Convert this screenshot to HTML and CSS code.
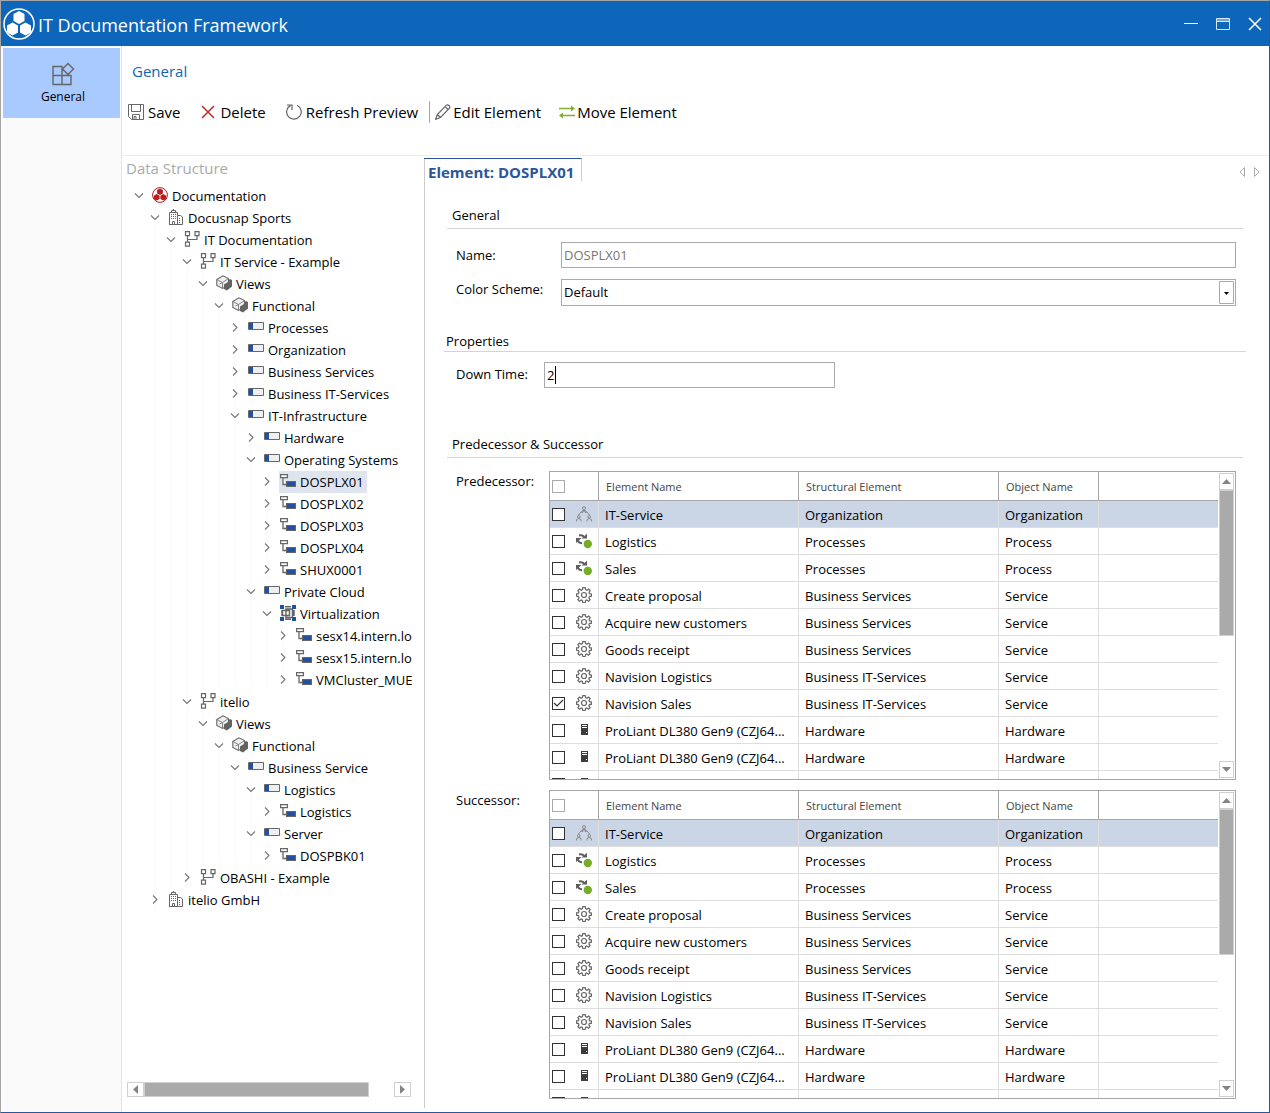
FILE: index.html
```html
<!DOCTYPE html>
<html lang="en">
<head>
<meta charset="utf-8">
<title>IT Documentation Framework</title>
<link rel="stylesheet" href="styles.css">
</head>
<body>
<svg class="defs" aria-hidden="true">
  <symbol id="open" viewBox="0 0 16 16"><path d="M4 5.500l4 4 4-4" fill="none" stroke="#777" stroke-width="1.100"/></symbol>
  <symbol id="shut" viewBox="0 0 16 16"><path d="M6 3.500l4 4-4 4" fill="none" stroke="#777" stroke-width="1.100"/></symbol>
  <symbol id="doc" viewBox="0 0 16 16"><circle cx="8" cy="8" r="7.400" fill="#fff" stroke="#b81c1c"/><g fill="#b81c1c"><path d="M8 1.500l2.900 1.600v3.300L8 8 5.100 6.400V3.100zM4.700 7.100l2.900 1.600V12l-2.900 1.500L1.800 12V8.700zM11.300 7.100l2.900 1.600V12l-2.900 1.500L8.400 12V8.700z"/></g></symbol>
  <symbol id="bldg" viewBox="0 0 16 16"><g fill="none" stroke="#666"><path d="M1.500 15.500v-12h8v12M3.500 3.500v-2h4v2M5.500 1.500V0M9.500 6.500h3l2 1.500v7.500H1M4.500 15.500v-3h2v3"/><path d="M3 5.500h5M3 7.500h5M3 9.500h5M11 9.500h2M11 11.500h2M11 13.500h2" stroke-dasharray="1 1"/></g></symbol>
  <symbol id="net" viewBox="0 0 16 16"><g fill="none" stroke="#666" stroke-width="1.200"><path d="M1.500.6h4v4h-4zM11 .6h4v4h-4zM1.500 11.200h4v4h-4zM3.500 4.600v6.600M3.500 8.500h9.500V4.600"/></g></symbol>
  <symbol id="cube" viewBox="0 0 16 16"><path d="M.8 4.500L7 .8l5.500 2.700v7L6.500 13.500l-5.700-3z" fill="#f0f0f0" stroke="#666" stroke-width="1.100"/><path d="M.8 4.500l5.700 3 6-4M6.500 7.500v6M3.500 9l3-1.500" fill="none" stroke="#777" stroke-width=".9"/><path d="M8 9.500l4-2.500V5.500L14 4l2 1v6.500L11 15.500 8 14z" fill="#636363"/></symbol>
  <symbol id="bar" viewBox="0 0 16 16"><path d="M.5 3.500h15v7H.5z" fill="#efeff1" stroke="#666"/><path d="M1 4h4v6H1z" fill="#2350a0"/></symbol>
  <symbol id="node" viewBox="0 0 16 16"><path d="M.6 1.600h6.800v3H.6zM3 5v6.500h4" fill="#fff" stroke="#666" stroke-width="1.300"/><path d="M6.500 8.500h9v5h-9z" fill="#2350a0" stroke="#666" stroke-width="1.200"/></symbol>
  <symbol id="virt" viewBox="0 0 16 16"><g fill="none" stroke="#666" stroke-width="1.500"><path d="M2.500 5.500h7v5h-7zM6 4h6.500v8.500H6zM5 1.700h6M5 14.300h6M14 5v6M2 5v6"/></g><path d="M0 0h4v4H0zM12 0h4v4h-4zM0 12h4v4H0zM12 12h4v4h-4z" fill="#2350a0"/></symbol>
  <symbol id="org" viewBox="0 0 16 16"><g fill="none" stroke="#888"><circle cx="8" cy="2.200" r="1.500"/><path d="M5.800 7V5.200L8 4l2.200 1.200V7M6.500 7l.5-2h2l.5 2M5 6L2.500 9M11 6l2.500 3"/><circle cx="2.800" cy="10.800" r="1.300"/><circle cx="13.200" cy="10.800" r="1.300"/><path d="M.6 15.500v-2l2.200-1 2.200 1v2M11 15.500v-2l2.200-1 2.200 1v2"/></g></symbol>
  <symbol id="proc" viewBox="0 0 16 16"><path d="M3 2.500c2.500-.8 4.500 0 5.500 2M2 7c0 2 1 3 4 3.200" fill="none" stroke="#5e5e5e" stroke-width="2"/><path d="M5.500 5.500h5.500V.8zM0 5h5.500L0 10z" fill="#5e5e5e"/><circle cx="11.800" cy="11" r="4.200" fill="#76ac28"/></symbol>
  <symbol id="gear" viewBox="0 0 16 16"><g fill="none" stroke="#666" stroke-width="1.200"><path d="M6.800.6h2.400l.4 2 1.300.6 1.700-1.200 1.600 1.600L13 5.300l.5 1.300 1.900.3v2.300l-2 .4-.5 1.300 1.200 1.700-1.600 1.600-1.700-1.200-1.200.5-.4 2H6.800l-.4-2-1.200-.5-1.700 1.200-1.600-1.600L3 10.900l-.5-1.300-2-.4V6.900l2-.3L3 5.300 1.900 3.600 3.500 2l1.700 1.200 1.200-.6z"/><circle cx="8" cy="8" r="2.500"/></g></symbol>
  <symbol id="srv" viewBox="0 0 16 16"><path d="M5 2h7v11H5z" fill="#3c3c3c"/><path d="M6 3.500h5M6 5.500h5" stroke="#fff"/><path d="M10 10h1v1h-1z" fill="#fff"/></symbol>
  <symbol id="up" viewBox="0 0 9 9"><path d="M0 7l4.500-5L9 7z" fill="#848484"/></symbol>
  <symbol id="down" viewBox="0 0 9 9"><path d="M0 2l4.500 5L9 2z" fill="#848484"/></symbol>
</svg>
<div class="window">
  <header class="titlebar">
    <svg class="logo" viewBox="0 0 32 32"><circle cx="16" cy="16" r="15" fill="none" stroke="#fff" stroke-width="1.500"/><path d="M16 3l5.500 3v7L16 16l-5.500-3V6zM9.500 14.500l5.500 3v7l-5.500 3-5.500-3v-7zM22.500 14.500l5.500 3v7l-5.500 3-5.500-3v-7z" fill="#fff"/></svg>
    <h1>IT Documentation Framework</h1>
    <div class="controls">
      <button aria-label="Minimize"><svg viewBox="0 0 16 16"><path d="M1 5.500h14" stroke="#fff"/></svg></button>
      <button aria-label="Maximize"><svg viewBox="0 0 16 16"><path d="M1 1h14v3H1z" fill="#6ea3d6"/><path d="M1.500.5h13v11h-13zM1.500 3.500h13" fill="none" stroke="#d8e6f5"/></svg></button>
      <button aria-label="Close"><svg viewBox="0 0 16 16"><path d="M2 0l12 12M14 0L2 12" stroke="#fff" stroke-width="1.500"/></svg></button>
    </div>
  </header>
  <div class="body">
    <nav class="side">
      <button class="tile"><svg viewBox="0 0 24 24"><path d="M2 4.500h9v9H2zM2 13.500h9v9H2zM11 13.500h9v9h-9zM17 1.500l5.500 5.500-5.500 5.500L11.500 7z" fill="none" stroke="#666" stroke-width="1.400"/></svg><span>General</span></button>
    </nav>
    <main class="main">
      <section class="ribbon">
        <h2>General</h2>
        <div class="tools">
          <button><svg viewBox="0 0 16 16"><path d="M.5.5h15v15H3.500l-3-3zM3.500.5v7h9v-7M4.500 15.500v-5h7v5M6 12.500h2v3H6z" fill="none" stroke="#666"/></svg>Save</button>
          <button class="delete"><svg viewBox="0 0 16 16"><path d="M2 2l12 12M14 2L2 14" stroke="#c02a2a" stroke-width="1.500"/></svg>Delete</button>
          <button class="refresh"><svg viewBox="0 0 16 16"><path d="M11 1.200a7.300 7.300 0 1 1-6.500.2M1 1h5v5" fill="none" stroke="#666" stroke-width="1.200"/></svg>Refresh Preview</button>
          <button class="edit"><svg viewBox="0 0 16 16"><path d="M.7 15.300l1.600-4.800L11.500 1.200q1.200-1 2.500.3t.5 2.700L5.500 13.500zM2.300 10.500l3.200 3M10 2.700l3.300 3.300" fill="none" stroke="#666" stroke-width="1.200"/></svg>Edit Element</button>
          <button class="move"><svg viewBox="0 0 16 16"><path d="M0 4.500h13M3 11.500h13" stroke="#84ae2a" stroke-width="1.600"/><path d="M12 1.500l4 3-4 3zM4 8.500l-4 3 4 3z" fill="#84ae2a"/></svg>Move Element</button>
        </div>
      </section>
      <div class="work">
        <section class="treepane">
          <h3>Data Structure</h3>
          <ul class="tree">
            <li><div class="row"><button aria-label="Collapse"><svg><use href="#open"/></svg></button><span><svg><use href="#doc"/></svg>Documentation</span></div><ul>
              <li><div class="row"><button aria-label="Collapse"><svg><use href="#open"/></svg></button><span><svg><use href="#bldg"/></svg>Docusnap Sports</span></div><ul>
                <li><div class="row"><button aria-label="Collapse"><svg><use href="#open"/></svg></button><span><svg><use href="#net"/></svg>IT Documentation</span></div><ul>
                  <li><div class="row"><button aria-label="Collapse"><svg><use href="#open"/></svg></button><span><svg><use href="#net"/></svg>IT Service - Example</span></div><ul>
                    <li><div class="row"><button aria-label="Collapse"><svg><use href="#open"/></svg></button><span><svg><use href="#cube"/></svg>Views</span></div><ul>
                      <li><div class="row"><button aria-label="Collapse"><svg><use href="#open"/></svg></button><span><svg><use href="#cube"/></svg>Functional</span></div><ul>
                        <li><div class="row"><button aria-label="Expand"><svg><use href="#shut"/></svg></button><span><svg><use href="#bar"/></svg>Processes</span></div></li>
                        <li><div class="row"><button aria-label="Expand"><svg><use href="#shut"/></svg></button><span><svg><use href="#bar"/></svg>Organization</span></div></li>
                        <li><div class="row"><button aria-label="Expand"><svg><use href="#shut"/></svg></button><span><svg><use href="#bar"/></svg>Business Services</span></div></li>
                        <li><div class="row"><button aria-label="Expand"><svg><use href="#shut"/></svg></button><span><svg><use href="#bar"/></svg>Business IT-Services</span></div></li>
                        <li><div class="row"><button aria-label="Collapse"><svg><use href="#open"/></svg></button><span><svg><use href="#bar"/></svg>IT-Infrastructure</span></div><ul>
                          <li><div class="row"><button aria-label="Expand"><svg><use href="#shut"/></svg></button><span><svg><use href="#bar"/></svg>Hardware</span></div></li>
                          <li><div class="row"><button aria-label="Collapse"><svg><use href="#open"/></svg></button><span><svg><use href="#bar"/></svg>Operating Systems</span></div><ul>
                            <li><div class="row"><button aria-label="Expand"><svg><use href="#shut"/></svg></button><span class="selected"><svg><use href="#node"/></svg>DOSPLX01</span></div></li>
                            <li><div class="row"><button aria-label="Expand"><svg><use href="#shut"/></svg></button><span><svg><use href="#node"/></svg>DOSPLX02</span></div></li>
                            <li><div class="row"><button aria-label="Expand"><svg><use href="#shut"/></svg></button><span><svg><use href="#node"/></svg>DOSPLX03</span></div></li>
                            <li><div class="row"><button aria-label="Expand"><svg><use href="#shut"/></svg></button><span><svg><use href="#node"/></svg>DOSPLX04</span></div></li>
                            <li><div class="row"><button aria-label="Expand"><svg><use href="#shut"/></svg></button><span><svg><use href="#node"/></svg>SHUX0001</span></div></li>
                          </ul></li>
                          <li><div class="row"><button aria-label="Collapse"><svg><use href="#open"/></svg></button><span><svg><use href="#bar"/></svg>Private Cloud</span></div><ul>
                            <li><div class="row"><button aria-label="Collapse"><svg><use href="#open"/></svg></button><span><svg><use href="#virt"/></svg>Virtualization</span></div><ul>
                              <li><div class="row"><button aria-label="Expand"><svg><use href="#shut"/></svg></button><span><svg><use href="#node"/></svg>sesx14.intern.local</span></div></li>
                              <li><div class="row"><button aria-label="Expand"><svg><use href="#shut"/></svg></button><span><svg><use href="#node"/></svg>sesx15.intern.local</span></div></li>
                              <li><div class="row"><button aria-label="Expand"><svg><use href="#shut"/></svg></button><span><svg><use href="#node"/></svg>VMCluster_MUENCHEN</span></div></li>
                            </ul></li>
                          </ul></li>
                        </ul></li>
                      </ul></li>
                    </ul></li>
                  </ul></li>
                  <li><div class="row"><button aria-label="Collapse"><svg><use href="#open"/></svg></button><span><svg><use href="#net"/></svg>itelio</span></div><ul>
                    <li><div class="row"><button aria-label="Collapse"><svg><use href="#open"/></svg></button><span><svg><use href="#cube"/></svg>Views</span></div><ul>
                      <li><div class="row"><button aria-label="Collapse"><svg><use href="#open"/></svg></button><span><svg><use href="#cube"/></svg>Functional</span></div><ul>
                        <li><div class="row"><button aria-label="Collapse"><svg><use href="#open"/></svg></button><span><svg><use href="#bar"/></svg>Business Service</span></div><ul>
                          <li><div class="row"><button aria-label="Collapse"><svg><use href="#open"/></svg></button><span><svg><use href="#bar"/></svg>Logistics</span></div><ul>
                            <li><div class="row"><button aria-label="Expand"><svg><use href="#shut"/></svg></button><span><svg><use href="#node"/></svg>Logistics</span></div></li>
                          </ul></li>
                          <li><div class="row"><button aria-label="Collapse"><svg><use href="#open"/></svg></button><span><svg><use href="#bar"/></svg>Server</span></div><ul>
                            <li><div class="row"><button aria-label="Expand"><svg><use href="#shut"/></svg></button><span><svg><use href="#node"/></svg>DOSPBK01</span></div></li>
                          </ul></li>
                        </ul></li>
                      </ul></li>
                    </ul></li>
                  </ul></li>
                  <li><div class="row"><button aria-label="Expand"><svg><use href="#shut"/></svg></button><span><svg><use href="#net"/></svg>OBASHI - Example</span></div></li>
                </ul></li>
              </ul></li>
              <li><div class="row"><button aria-label="Expand"><svg><use href="#shut"/></svg></button><span><svg><use href="#bldg"/></svg>itelio GmbH</span></div></li>
            </ul></li>
          </ul>
          <div class="hscroll">
            <button aria-label="Scroll left"><svg viewBox="0 0 9 9"><path d="M7 0L2 4.500 7 9z" fill="#848484"/></svg></button>
            <div class="track"><div class="thumb"></div></div>
            <button aria-label="Scroll right"><svg viewBox="0 0 9 9"><path d="M2 0l5 4.500L2 9z" fill="#848484"/></svg></button>
          </div>
        </section>
        <section class="detail">
          <div class="tabs">
            <h3 class="tab">Element: DOSPLX01</h3>
            <div class="pager">
              <button aria-label="Previous tab"><svg viewBox="0 0 7 10"><path d="M5.500.5v9L1 5z" fill="none" stroke="#aaa"/></svg></button>
              <button aria-label="Next tab"><svg viewBox="0 0 7 10"><path d="M1.500.5v9L6 5z" fill="none" stroke="#aaa"/></svg></button>
            </div>
          </div>
          <form class="form">
            <h4>General</h4>
            <div class="field name"><label for="name">Name:</label><input id="name" value="DOSPLX01" readonly></div>
            <div class="field scheme"><label for="scheme">Color Scheme:</label><div class="drop"><select id="scheme"><option>Default</option></select><svg viewBox="0 0 15 23"><path d="M.5.5h14v22H.5z" fill="#fff" stroke="#aaa"/><path d="M5 11h5l-2.500 3z"/></svg></div></div>
            <h4 class="wide">Properties</h4>
            <div class="field down"><label for="down">Down Time:</label><div class="edit-box"><input id="down" value="2"><i class="caret"></i></div></div>
            <h4>Predecessor &amp; Successor</h4>
            <div class="field list"><label for="pre-all">Predecessor:</label>
              <div class="grid"><div class="view"><table>
                <colgroup><col class="c-pick"><col class="c-name"><col class="c-name"><col class="c-obj"><col></colgroup>
                <thead><tr><th><input type="checkbox" id="pre-all" aria-label="Select all predecessors"></th><th>Element Name</th><th>Structural Element</th><th>Object Name</th><th></th></tr></thead>
                <tbody>
                <tr class="current"><td><input type="checkbox" aria-label="IT-Service"><svg><use href="#org"/></svg></td><td>IT-Service</td><td>Organization</td><td>Organization</td><td></td></tr>
                <tr><td><input type="checkbox" aria-label="Logistics"><svg><use href="#proc"/></svg></td><td>Logistics</td><td>Processes</td><td>Process</td><td></td></tr>
                <tr><td><input type="checkbox" aria-label="Sales"><svg><use href="#proc"/></svg></td><td>Sales</td><td>Processes</td><td>Process</td><td></td></tr>
                <tr><td><input type="checkbox" aria-label="Create proposal"><svg><use href="#gear"/></svg></td><td>Create proposal</td><td>Business Services</td><td>Service</td><td></td></tr>
                <tr><td><input type="checkbox" aria-label="Acquire new customers"><svg><use href="#gear"/></svg></td><td>Acquire new customers</td><td>Business Services</td><td>Service</td><td></td></tr>
                <tr><td><input type="checkbox" aria-label="Goods receipt"><svg><use href="#gear"/></svg></td><td>Goods receipt</td><td>Business Services</td><td>Service</td><td></td></tr>
                <tr><td><input type="checkbox" aria-label="Navision Logistics"><svg><use href="#gear"/></svg></td><td>Navision Logistics</td><td>Business IT-Services</td><td>Service</td><td></td></tr>
                <tr><td><input type="checkbox" checked aria-label="Navision Sales"><svg><use href="#gear"/></svg></td><td>Navision Sales</td><td>Business IT-Services</td><td>Service</td><td></td></tr>
                <tr><td><input type="checkbox" aria-label="ProLiant DL380"><svg><use href="#srv"/></svg></td><td>ProLiant DL380 Gen9 (CZJ64...</td><td>Hardware</td><td>Hardware</td><td></td></tr>
                <tr><td><input type="checkbox" aria-label="ProLiant DL380"><svg><use href="#srv"/></svg></td><td>ProLiant DL380 Gen9 (CZJ64...</td><td>Hardware</td><td>Hardware</td><td></td></tr>
                <tr><td><input type="checkbox" aria-label="More"><svg><use href="#srv"/></svg></td><td></td><td></td><td></td><td></td></tr>
                </tbody></table></div>
                <div class="vscroll"><button type="button" aria-label="Scroll up"><svg><use href="#up"/></svg></button><div class="track"><div class="thumb"></div></div><button type="button" aria-label="Scroll down"><svg><use href="#down"/></svg></button></div>
              </div>
            </div>
            <div class="field list"><label for="suc-all">Successor:</label>
              <div class="grid"><div class="view"><table>
                <colgroup><col class="c-pick"><col class="c-name"><col class="c-name"><col class="c-obj"><col></colgroup>
                <thead><tr><th><input type="checkbox" id="suc-all" aria-label="Select all successors"></th><th>Element Name</th><th>Structural Element</th><th>Object Name</th><th></th></tr></thead>
                <tbody>
                <tr class="current"><td><input type="checkbox" aria-label="IT-Service"><svg><use href="#org"/></svg></td><td>IT-Service</td><td>Organization</td><td>Organization</td><td></td></tr>
                <tr><td><input type="checkbox" aria-label="Logistics"><svg><use href="#proc"/></svg></td><td>Logistics</td><td>Processes</td><td>Process</td><td></td></tr>
                <tr><td><input type="checkbox" aria-label="Sales"><svg><use href="#proc"/></svg></td><td>Sales</td><td>Processes</td><td>Process</td><td></td></tr>
                <tr><td><input type="checkbox" aria-label="Create proposal"><svg><use href="#gear"/></svg></td><td>Create proposal</td><td>Business Services</td><td>Service</td><td></td></tr>
                <tr><td><input type="checkbox" aria-label="Acquire new customers"><svg><use href="#gear"/></svg></td><td>Acquire new customers</td><td>Business Services</td><td>Service</td><td></td></tr>
                <tr><td><input type="checkbox" aria-label="Goods receipt"><svg><use href="#gear"/></svg></td><td>Goods receipt</td><td>Business Services</td><td>Service</td><td></td></tr>
                <tr><td><input type="checkbox" aria-label="Navision Logistics"><svg><use href="#gear"/></svg></td><td>Navision Logistics</td><td>Business IT-Services</td><td>Service</td><td></td></tr>
                <tr><td><input type="checkbox" aria-label="Navision Sales"><svg><use href="#gear"/></svg></td><td>Navision Sales</td><td>Business IT-Services</td><td>Service</td><td></td></tr>
                <tr><td><input type="checkbox" aria-label="ProLiant DL380"><svg><use href="#srv"/></svg></td><td>ProLiant DL380 Gen9 (CZJ64...</td><td>Hardware</td><td>Hardware</td><td></td></tr>
                <tr><td><input type="checkbox" aria-label="ProLiant DL380"><svg><use href="#srv"/></svg></td><td>ProLiant DL380 Gen9 (CZJ64...</td><td>Hardware</td><td>Hardware</td><td></td></tr>
                <tr><td><input type="checkbox" aria-label="More"><svg><use href="#srv"/></svg></td><td></td><td></td><td></td><td></td></tr>
                </tbody></table></div>
                <div class="vscroll"><button type="button" aria-label="Scroll up"><svg><use href="#up"/></svg></button><div class="track"><div class="thumb"></div></div><button type="button" aria-label="Scroll down"><svg><use href="#down"/></svg></button></div>
              </div>
            </div>
          </form>
        </section>
      </div>
    </main>
  </div>
</div>
</body>
</html>
```
FILE: styles.css
```css
* { box-sizing: border-box; }
body { margin: 0; font: 13px/18px "Open Sans", "Noto Sans", sans-serif; color: #000; }
h1, h2, h3, h4 { margin: 0; font-weight: 400; }
ul { list-style: none; margin: 0; padding: 0; }
button { font: inherit; color: inherit; background: none; border: 0; padding: 0; margin: 0; }
svg { display: block; flex: none; }
.defs { position: absolute; width: 0; height: 0; }

.window { display: flex; flex-direction: column; min-height: 100vh; border: 1px solid #a6a6a6; border-right-color: #2b579a; border-bottom-color: #2b579a; background: #fff; }
.titlebar { display: flex; align-items: center; height: 45px; padding: 0 6px 0 2px; background: #0e66ba; color: #fff; }
.logo { width: 32px; height: 32px; }
.titlebar h1 { flex: 1; padding: 2px 0 0 3px; font-size: 18px; line-height: 24px; }
.controls { display: flex; gap: 16px; }
.controls svg { width: 16px; height: 12px; overflow: visible; }
.controls button { height: 12px; }
.controls svg { height: 16px; }

.body { display: flex; flex: 1; }
.side { width: 121px; padding: 2px 1px 0 2px; background: #fafafa; border-right: 1px solid #e3e3e3; }
.tile { display: flex; flex-direction: column; align-items: center; gap: 2px; width: 100%; height: 70px; padding-top: 14px; padding-left: 3px; background: #a9caff; font-size: 12px; }
.tile svg { width: 24px; height: 24px; }
.main { display: flex; flex: 1; flex-direction: column; min-width: 0; }

.ribbon { height: 110px; padding: 14px 6px 0; border-bottom: 1px solid #ececec; font-size: 15px; line-height: 22px; }
.ribbon h2 { padding-left: 4px; font-size: 15px; line-height: 22px; color: #0e66ba; }
.tools { display: flex; align-items: center; margin-top: 19px; }
.tools button { display: flex; align-items: center; gap: 4px; }
.tools svg { width: 16px; height: 16px; }
.tools .delete { margin-left: 20px; }
.tools .refresh { margin-left: 20px; }
.tools .edit { gap: 2px; margin-left: 11px; padding-left: 5px; border-left: 1px solid #a6a6a6; }
.tools .move { gap: 2px; margin-left: 18px; }

.work { display: flex; flex: 1; padding-top: 2px; }
.treepane { display: flex; flex-direction: column; width: 302px; flex: none; padding: 0 12px 15px 4px; overflow: hidden; }
.treepane h3 { color: #aaa; font-size: 15px; line-height: 20px; }
.tree { flex: 1; margin-top: 7px; padding-left: 5px; overflow: hidden; }
.tree ul { margin-left: 16px; background: linear-gradient(#fafafa, #fafafa) no-repeat 8px 0 / 1px 100%; }
.row { display: flex; align-items: center; height: 22px; white-space: nowrap; }
.row svg { width: 16px; height: 16px; }
.row button { margin-bottom: 1px; }
.row span { display: flex; align-items: center; gap: 4px; height: 22px; margin-left: 4px; padding: 1px 3px 1px 1px; }
.row span svg { margin-bottom: 2px; }
.row .selected { background: #dfe5ef; }

.hscroll { display: flex; height: 15px; margin: 0 1px; }
.hscroll button, .vscroll button { display: flex; align-items: center; justify-content: center; border: 1px solid #d0d0d0; }
.hscroll button { width: 17px; }
.hscroll svg, .vscroll svg { width: 9px; height: 9px; }
.track { flex: 1; }
.thumb { background: #aaa; border: 1px solid #d0d0d0; }
.hscroll .thumb { width: 90%; height: 100%; }

.detail { flex: 1; min-width: 0; margin-bottom: 4px; border-left: 1px solid #ccc; }
.tabs { display: flex; justify-content: space-between; margin-left: -1px; }
.tab { height: 23px; padding: 2px 7px 0 4px; border-top: 1px solid #2b579a; border-right: 1px solid #ccc; color: #2b579a; font-size: 15px; font-weight: 700; line-height: 22px; }
.pager { display: flex; gap: 7px; padding: 5px 9px 0 0; }
.pager svg { width: 7px; height: 10px; }

.form { padding: 25px 26px 0 22px; }
.form h4 { height: 23px; padding-left: 5px; border-bottom: 1px solid #d5d5d5; }
.form h4.wide { height: 20px; margin: 26px -3px 10px; padding-left: 2px; }
.field { display: flex; padding: 0 7px 0 9px; }
.field label { flex: none; width: 105px; line-height: 20px; padding-top: 3px; }
.field input:not([type=checkbox]), .drop select { width: 100%; height: 26px; padding: 0 2px; border: 1px solid #aaa; border-radius: 0; outline: 0; background: #fff; color: #000; font: inherit; appearance: none; }
.field.name { margin-top: 13px; }
.field #name { color: #777; flex: 1; }
.field.scheme { margin-top: 11px; }
.scheme label { padding-top: 0; }
.drop { position: relative; flex: 1; }
.drop select { height: 27px; padding-bottom: 2px; }
.drop svg { position: absolute; top: 2px; right: 2px; width: 15px; height: 23px; pointer-events: none; }
.field.down { margin-bottom: 47px; }
.down label { width: 88px; padding-top: 2px; }
.edit-box { position: relative; width: 291px; }
.edit-box input { caret-color: transparent; }
.caret { position: absolute; left: 11px; top: 4px; width: 1px; height: 18px; background: #000; }

.field.list { margin-top: 10px; }
.list label { width: 93px; padding-top: 0; }
.form h4 + .list { margin-top: 13px; }
.grid { display: flex; flex: 1; min-width: 0; height: 309px; border: 1px solid #a6a6a6; }
.view { flex: 1; min-width: 0; overflow: hidden; }
table { width: 100%; table-layout: fixed; border-collapse: separate; border-spacing: 0; }
.c-pick { width: 49px; }
.c-name { width: 200px; }
.c-obj { width: 100px; }
th { height: 29px; padding: 1px 7px 0; border-right: 1px solid #a6a6a6; border-bottom: 1px solid #a6a6a6; color: #444; font-size: 11px; font-weight: 400; text-align: left; }
td { height: 27px; padding: 2px 0 0 6px; border-right: 1px solid #dedede; border-bottom: 1px solid #dedede; white-space: nowrap; }
th:last-child, td:last-child { border-right: 0; }
th:first-child, td:first-child { padding: 0 0 2px 2px; }
td > svg { display: inline-block; width: 16px; height: 16px; margin-left: 11px; vertical-align: middle; }
.current td { background: #cad6e6; }
input[type=checkbox] { appearance: none; display: inline-block; width: 13px; height: 13px; margin: 0; border: 1px solid #333; background: #fff; vertical-align: middle; }
th input[type=checkbox] { border-color: #aaa; }
input[type=checkbox]:checked { background: #fff url("data:image/svg+xml,%3Csvg xmlns='http://www.w3.org/2000/svg' viewBox='0 0 11 11'%3E%3Cpath d='M1 5l3 3 6-6' fill='none' stroke='%23333' stroke-width='1.200'/%3E%3C/svg%3E"); }
.vscroll { display: flex; flex-direction: column; width: 17px; padding: 1px; }
.vscroll button { width: 15px; height: 17px; }
.vscroll .thumb { height: 54%; }
```
